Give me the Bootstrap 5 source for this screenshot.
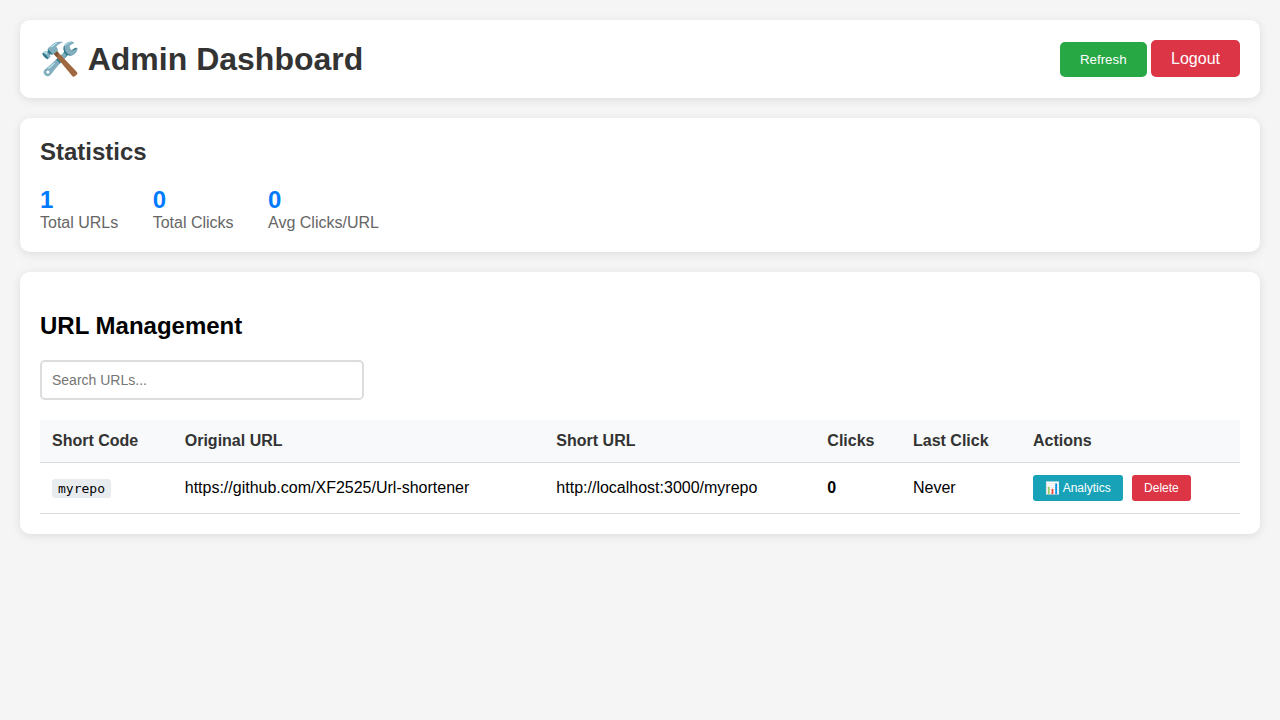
<!DOCTYPE html>
<html lang="en">
<head>
  <meta charset="UTF-8">
  <meta name="viewport" content="width=device-width, initial-scale=1.0">
  <title>Admin Dashboard</title>
  <link href="https://cdn.jsdelivr.net/npm/bootstrap@5.3.3/dist/css/bootstrap.min.css" rel="stylesheet">
  <style>
    body { background: #f5f5f5; padding: 20px; font-family: "Liberation Sans", Arial, sans-serif; font-size: 16px; line-height: normal; color: #000; }
    .panel { background: #fff; padding: 20px; border-radius: 10px; box-shadow: 0 2px 10px rgba(0,0,0,.1); margin-bottom: 20px; }
    .panel-title { font-size: 32px; font-weight: 700; color: #333; margin: 0; line-height: 38px; }
    .section-title { font-size: 24px; font-weight: 700; color: #333; margin: 0 0 20px; line-height: 28px; }
    .section-title.plain { color: #000; margin: 20px 0; }
    .stat-item { margin-right: 30px; }
    .stat-num { font-size: 24px; font-weight: 700; color: #007bff; line-height: 28px; }
    .stat-label { color: #666; line-height: 18px; }
    .header-actions { padding-bottom: 1px; }
    .act { border: 0; color: #fff; border-radius: 5px; vertical-align: baseline; line-height: normal; }
    .act-refresh { background: #28a745; font-size: 13.33px; padding: 10px 20px; }
    .act-logout { background: #dc3545; font-size: 16px; padding: 10px 20px 9px; }
    .search-box { width: 324px; height: 40px; border: 2px solid #ddd; border-radius: 5px; padding: 10px; font-size: 14px; margin-bottom: 20px; display: block; }
    .search-box::placeholder { color: #757575; }
    .url-table { width: 100%; border-collapse: collapse; }
    .url-table th { background: #f8f9fa; color: #333; font-weight: 700; padding: 12px; border-bottom: 1px solid #ddd; text-align: left; }
    .url-table td { padding: 12px; border-bottom: 1px solid #ddd; vertical-align: middle; }
    .code-tag { background: #e9ecef; color: #000; font-family: "DejaVu Sans Mono", monospace; font-size: 13px; padding: 2px 6px; border-radius: 3px; }
    .act-sm { font-size: 12px; padding: 6px 12px; border-radius: 3px; }
    .act-info { background: #17a2b8; }
    .act-del { background: #dc3545; margin-left: 5px; }
  </style>
</head>
<body>
  <div class="panel d-flex justify-content-between align-items-center">
    <h1 class="panel-title">🛠️ Admin Dashboard</h1>
    <div class="header-actions">
      <button class="act act-refresh">Refresh</button>
      <button class="act act-logout">Logout</button>
    </div>
  </div>

  <div class="panel">
    <h2 class="section-title">Statistics</h2>
    <div>
      <div class="d-inline-block stat-item">
        <div class="stat-num">1</div>
        <div class="stat-label">Total URLs</div>
      </div>
      <div class="d-inline-block stat-item">
        <div class="stat-num">0</div>
        <div class="stat-label">Total Clicks</div>
      </div>
      <div class="d-inline-block stat-item">
        <div class="stat-num">0</div>
        <div class="stat-label">Avg Clicks/URL</div>
      </div>
    </div>
  </div>

  <div class="panel">
    <h2 class="section-title plain">URL Management</h2>
    <input type="text" class="search-box" placeholder="Search URLs...">
    <table class="url-table">
      <thead>
        <tr>
          <th>Short Code</th>
          <th>Original URL</th>
          <th>Short URL</th>
          <th>Clicks</th>
          <th>Last Click</th>
          <th>Actions</th>
        </tr>
      </thead>
      <tbody>
        <tr>
          <td><code class="code-tag">myrepo</code></td>
          <td>https://github.com/XF2525/Url-shortener</td>
          <td>http://localhost:3000/myrepo</td>
          <td><strong>0</strong></td>
          <td>Never</td>
          <td>
            <button class="act act-sm act-info">📊 Analytics</button>
            <button class="act act-sm act-del">Delete</button>
          </td>
        </tr>
      </tbody>
    </table>
  </div>
  <script src="https://cdn.jsdelivr.net/npm/bootstrap@5.3.3/dist/js/bootstrap.bundle.min.js"></script>
</body>
</html>
